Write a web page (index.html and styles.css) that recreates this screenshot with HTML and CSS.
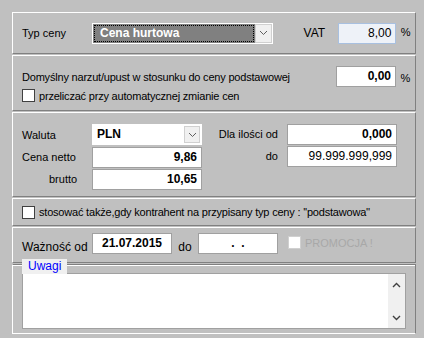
FILE: index.html
```html
<!DOCTYPE html>
<html lang="pl">
<head>
  <meta charset="UTF-8">
  <title>Cena</title>
  <link rel="stylesheet" href="styles.css">
</head>
<body>
  <div class="frame">
    <div class="section s-type">
      <span class="lbl w70">Typ ceny</span>
      <div class="combo combo-focus">
        <span class="combo-text"><span class="focus-rect">Cena hurtowa</span></span>
        <span class="combo-btn"><svg width="9" height="6" viewBox="0 0 9 6"><path d="M1 1 L4.5 4.5 L8 1" fill="none" stroke="#606060" stroke-width="1"/></svg></span>
      </div>
      <span class="lbl vat">VAT</span>
      <div class="field field-ro">8,00</div>
      <span class="pct">%</span>
    </div>

    <div class="section s-markup">
      <div class="row">
        <span class="lbl grow narrow">Domyślny narzut/upust w stosunku do ceny podstawowej</span>
        <div class="field bold">0,00</div>
        <span class="pct">%</span>
      </div>
      <label class="check narrow"><span class="box"></span>przeliczać przy automatycznej zmianie cen</label>
    </div>

    <div class="section s-price">
      <div class="col-left">
        <div class="row">
          <span class="lbl w70">Waluta</span>
          <div class="combo combo-plain">
            <span class="combo-text bold">PLN</span>
            <span class="combo-btn"><svg width="9" height="6" viewBox="0 0 9 6"><path d="M1 1 L4.5 4.5 L8 1" fill="none" stroke="#606060" stroke-width="1"/></svg></span>
          </div>
        </div>
        <div class="row">
          <span class="lbl w70">Cena netto</span>
          <div class="field bold w110">9,86</div>
        </div>
        <div class="row">
          <span class="lbl w70 indent">brutto</span>
          <div class="field bold w110">10,65</div>
        </div>
      </div>
      <div class="col-right">
        <div class="row">
          <span class="lbl right">Dla ilości od</span>
          <div class="field bold w110">0,000</div>
        </div>
        <div class="row">
          <span class="lbl right">do</span>
          <div class="field w110">99.999.999,999</div>
        </div>
      </div>
    </div>

    <div class="section s-also">
      <label class="check narrow"><span class="box"></span>stosować także,gdy kontrahent na przypisany typ ceny : ''podstawowa''</label>
    </div>

    <div class="section s-date">
      <span class="lbl w70">Ważność od</span>
      <div class="field date bold center">21.07.2015</div>
      <span class="lbl do">do</span>
      <div class="field date center empty">. &nbsp;.</div>
      <label class="check disabled"><span class="box"></span>PROMOCJA !</label>
    </div>

    <div class="group">
      <span class="group-title">Uwagi</span>
      <div class="memo">
        <div class="memo-text"></div>
        <div class="scroll">
          <svg width="9" height="6" viewBox="0 0 9 6"><path d="M1 5 L4.5 1.5 L8 5" fill="none" stroke="#404040" stroke-width="1.4"/></svg>
          <svg width="9" height="6" viewBox="0 0 9 6"><path d="M1 1 L4.5 4.5 L8 1" fill="none" stroke="#404040" stroke-width="1.4"/></svg>
        </div>
      </div>
    </div>
  </div>
</body>
</html>
```

FILE: styles.css
```css
html, body {
  margin: 0;
  padding: 0;
}
body {
  background-color: #c0c0c0;
  font-family: "Liberation Sans", Arial, sans-serif;
  font-size: 11px;
  color: #000;
  width: 424px;
  height: 338px;
  overflow: hidden;
}
.frame {
  margin: 12px 0 0 12px;
  width: 404px;
  display: flex;
  flex-direction: column;
  gap: 1px;
}
.section {
  border-top: 1px solid #ffffff;
  border-left: 1px solid #ffffff;
  border-bottom: 1px solid #808080;
  border-right: 1px solid #808080;
  box-sizing: border-box;
  padding: 0 0 0 9px;
}
.row {
  display: flex;
  align-items: center;
}
.lbl {
  white-space: nowrap;
}
.narrow {
  font-size: 11px;
  letter-spacing: -0.2px;
}
.w70 {
  width: 70px;
  flex: none;
}
.grow {
  flex: 1;
}
.indent {
  padding-left: 27px;
  box-sizing: border-box;
}
.pct {
  width: 19px;
  text-align: center;
  font-size: 11px;
  align-self: flex-start;
  padding-top: 6px;
}
.field {
  background: #ffffff;
  border: 1px solid #a0a0a0;
  box-sizing: border-box;
  width: 60px;
  height: 21px;
  line-height: 19px;
  text-align: right;
  padding-right: 4px;
  font-size: 12px;
}
.bold {
  font-weight: bold;
}
.center {
  text-align: center;
  padding-right: 0;
}
.empty {
  color: #000;
  font-weight: bold;
}
.field-ro {
  background: #eef2f8;
  border-color: #a8c0e0;
}
.w110 {
  width: 110px;
}

/* typ ceny */
.s-type {
  height: 42px;
  display: flex;
  align-items: center;
}
.s-type .pct {
  padding-top: 13px;
}
.combo {
  display: flex;
  box-sizing: border-box;
  border: 1px solid #ffffff;
  height: 21px;
}
.combo-focus {
  width: 185px;
  background: #808080;
  color: #ffffff;
  font-weight: bold;
  font-size: 12px;
}
.combo-focus .combo-text {
  flex: 1;
  padding: 1px;
  display: flex;
}
.focus-rect {
  flex: 1;
  border: 1px dotted #000;
  padding-left: 5px;
  line-height: 15px;
}
.combo-btn {
  width: 17px;
  background: #f0f0f0;
  border: 1px solid #d0d0d0;
  display: flex;
  align-items: center;
  justify-content: center;
  box-sizing: border-box;
}
.vat {
  margin-left: 31px;
  width: 35px;
  font-size: 12px;
}
.combo-plain {
  width: 110px;
  background: #ffffff;
  border-color: #ffffff;
  font-size: 12px;
}
.combo-plain .combo-text {
  flex: 1;
  padding-left: 4px;
  line-height: 19px;
}
.combo-plain .combo-btn {
  margin: 1px;
  width: 16px;
}

/* narzut */
.s-markup {
  height: 56px;
  padding-top: 10px;
}
.check {
  display: flex;
  align-items: center;
  gap: 4px;
  white-space: nowrap;
}
.box {
  width: 11px;
  height: 11px;
  background: #ffffff;
  border: 1px solid #404040;
  flex: none;
}
.s-markup .check {
  margin-top: 2px;
}

/* ceny */
.s-price {
  height: 85px;
  padding-top: 11px;
  display: flex;
}
.col-left {
  display: flex;
  flex-direction: column;
  gap: 2px;
}
.col-right {
  display: flex;
  flex-direction: column;
  gap: 2px;
  margin-left: 8px;
}
.col-right .lbl {
  width: 77px;
  text-align: right;
  padding-right: 9px;
  box-sizing: border-box;
}
.s-price .row {
  height: 20px;
}
.s-price .col-left .row:first-child {
  height: 21px;
}

/* stosowac */
.s-also {
  height: 28px;
  display: flex;
  align-items: center;
}

/* waznosc */
.s-date {
  height: 36px;
  display: flex;
  align-items: flex-end;
  padding-bottom: 8px;
  font-size: 12px;
}
.s-date .lbl {
  font-size: 12px;
}
.date {
  width: 80px;
  height: 21px;
}
.do {
  width: 26px;
  text-align: center;
}
.disabled {
  color: #a8a8a8;
  font-size: 11px;
  margin-left: 10px;
  align-self: center;
  margin-top: 3px;
}
.disabled .box {
  border-color: #d0d0d0;
}

/* uwagi */
.group {
  position: relative;
  height: 70px;
  border-top: 1px solid #808080;
  border-left: 1px solid #ffffff;
  border-right: 1px solid #808080;
  border-bottom: 1px solid #ffffff;
  box-shadow: inset 0 1px 0 #ffffff;
  box-sizing: border-box;
  padding: 8px 9px 0 9px;
}
.group-title {
  position: absolute;
  left: 9px;
  top: -6px;
  background: #f0f0f0;
  color: #0000ff;
  font-size: 12px;
  padding: 0 6px 0 6px;
  line-height: 15px;
}
.memo {
  display: flex;
  height: 54px;
  background: #ffffff;
  border: 1px solid #a0a0a0;
}
.memo-text {
  flex: 1;
}
.scroll {
  width: 17px;
  background: #f0f0f0;
  display: flex;
  flex-direction: column;
  justify-content: space-between;
  align-items: center;
  padding: 8px 0 7px 0;
}
```
